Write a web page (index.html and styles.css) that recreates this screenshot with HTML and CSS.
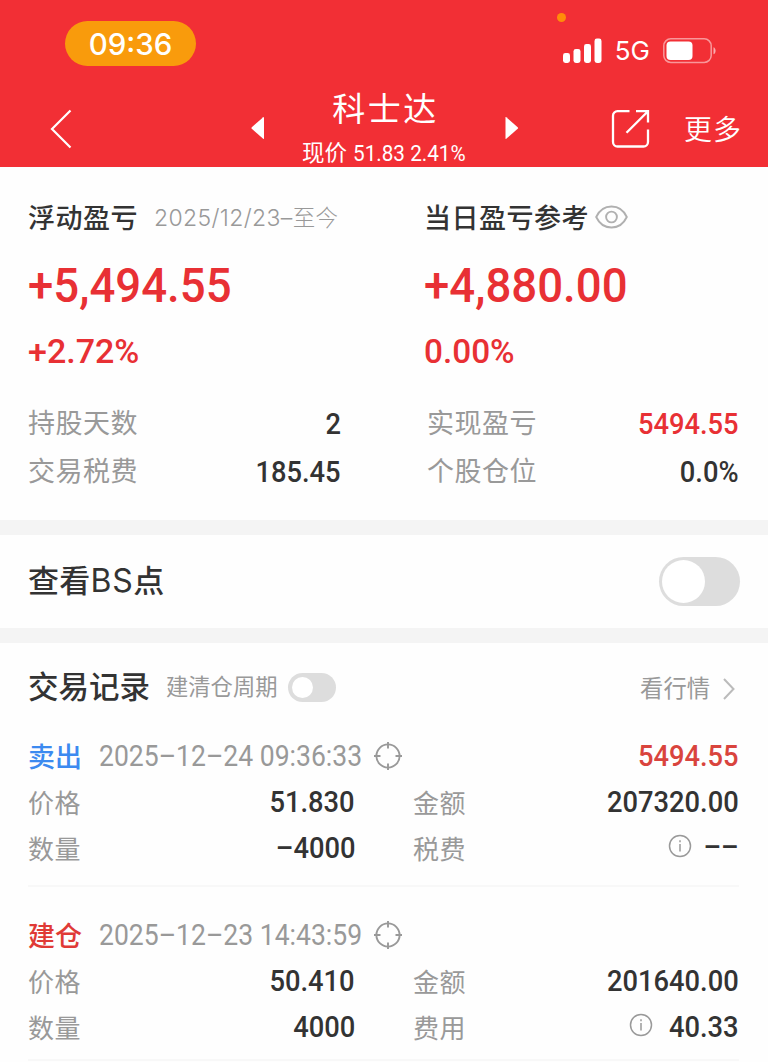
FILE: index.html
```html
<!DOCTYPE html>
<html lang="zh-CN">
<head>
<meta charset="utf-8">
<title>科士达</title>
<link rel="stylesheet" href="styles.css">
</head>
<body>
<header class="header">
  <div class="status">
    <span class="clock">09:36</span>
    <div class="status-right">
      <svg class="signal" width="40" height="26" viewBox="0 0 40 26" fill="#fff"><rect x="0" y="15" width="7" height="10" rx="2.4"/><rect x="10.5" y="11" width="7" height="14" rx="2.4"/><rect x="21" y="6" width="7" height="19" rx="2.4"/><rect x="31.5" y="0.5" width="7" height="24.5" rx="2.4"/></svg>
      <span class="net">5G</span>
      <svg class="battery" width="54" height="26" viewBox="0 0 54 26"><rect x="0.8" y="0.8" width="47.4" height="23.6" rx="7" fill="none" stroke="#fff" stroke-opacity=".5" stroke-width="1.5"/><rect x="3.5" y="3.5" width="26" height="18.4" rx="4" fill="#fff"/><path d="M50.5 9.2c2.800 1 2.800 6 0 7z" fill="#fff" opacity=".6"/></svg>
    </div>
    <i class="mic-dot"></i>
  </div>
  <nav class="nav">
    <svg class="back" width="22" height="40" viewBox="0 0 22 40" fill="none" stroke="#fff" stroke-width="2.200"><path d="M20.500 1.500 2 20l18.500 18.500"/></svg>
    <svg class="prev" width="14" height="24" viewBox="0 0 14 24" fill="#fff"><path d="M14 1.500v21q0 .8-.8.3L1.800 12.800q-.8-.8 0-1.600L13.200 1.200q.8-.5.8.3z"/></svg>
    <div class="title">
      <h1 class="name">科士达</h1>
      <p class="price">现价 <span class="num">51.83 2.41%</span></p>
    </div>
    <svg class="next" width="14" height="24" viewBox="0 0 14 24" fill="#fff"><path d="M.5 1.500v21q0 .8.8.3L12.700 12.800q.8-.8 0-1.600L1.300 1.200Q.5.700.5 1.500z"/></svg>
    <svg class="share" width="40" height="40" viewBox="0 0 40 40" fill="none" stroke="#fff" stroke-width="2.300"><path d="M18.500 2.200H6.500a4.500 4.500 0 0 0-4.500 4.500V33A4.500 4.500 0 0 0 6.500 37.500H32.500A4.500 4.500 0 0 0 37 33V20.500"/><path d="M25 2.200H37V13.500M37 2.200 15.500 23.700"/></svg>
    <span class="more">更多</span>
  </nav>
</header>

<section class="summary">
  <div class="col">
    <div class="col-title"><b>浮动盈亏</b><span class="period">2025/12/23–<span class="cjk">至今</span></span></div>
    <div class="amount"><span class="num">+5,494.55</span></div>
    <div class="percent"><span class="num">+2.72%</span></div>
    <div class="row"><span class="label">持股天数</span><span class="num value">2</span></div>
    <div class="row"><span class="label">交易税费</span><span class="num value">185.45</span></div>
  </div>
  <div class="col col-day">
    <div class="col-title"><b>当日盈亏参考</b><svg class="eye" width="33" height="24" viewBox="0 0 33 24" fill="none" stroke="#b0b0b0" stroke-width="1.900"><path d="M1.200 12C4.500 5 10 1.500 16.500 1.500S28.500 5 31.800 12C28.500 19 23 22.500 16.500 22.500S4.500 19 1.200 12z"/><circle cx="16.500" cy="12" r="5.400"/></svg></div>
    <div class="amount"><span class="num">+4,880.00</span></div>
    <div class="percent zero"><span class="num">0.00%</span></div>
    <div class="row"><span class="label">实现盈亏</span><span class="num value red">5494.55</span></div>
    <div class="row"><span class="label">个股仓位</span><span class="num value">0.0%</span></div>
  </div>
</section>

<section class="bs">
  <span class="bs-title">查看<span class="latin">BS</span>点</span>
  <span class="switch"></span>
</section>

<section class="records">
  <div class="records-head">
    <h2>交易记录</h2>
    <span class="cycle">建清仓周期</span>
    <span class="switch small"></span>
    <span class="quote">看行情</span>
    <svg width="12" height="22" viewBox="0 0 12 22" fill="none" stroke="#bbb" stroke-width="2"><path d="M1 1l9.500 10L1 21"/></svg>
  </div>

  <article class="record">
    <div class="record-head">
      <span class="side sell">卖出</span>
      <span class="num time">2025–12–24 09:36:33</span>
      <svg class="target" width="30" height="30" viewBox="0 0 30 30" fill="none" stroke="#999" stroke-width="1.900"><circle cx="15" cy="15" r="11.600"/><path d="M15 1v6.500M15 22.500v6.500M1 15h6.500M22.500 15h6.500"/></svg>
      <span class="num value profit">5494.55</span>
    </div>
    <div class="pair">
      <span class="label">价格</span><span class="num value">51.830</span>
      <span class="label second">金额</span><span class="num value">207320.00</span>
    </div>
    <div class="pair">
      <span class="label">数量</span><span class="num value">–4000</span>
      <span class="label second">税费</span><span class="fee"><svg width="24" height="24" viewBox="0 0 24 24" fill="none" stroke="#999" stroke-width="1.500"><circle cx="12" cy="12" r="10.500"/><path d="M12 10v7.500M12 6.300v2"/></svg><span class="num value dashes">––</span></span>
    </div>
  </article>

  <article class="record">
    <div class="record-head">
      <span class="side open">建仓</span>
      <span class="num time">2025–12–23 14:43:59</span>
      <svg class="target" width="30" height="30" viewBox="0 0 30 30" fill="none" stroke="#999" stroke-width="1.900"><circle cx="15" cy="15" r="11.600"/><path d="M15 1v6.500M15 22.500v6.500M1 15h6.500M22.500 15h6.500"/></svg>
    </div>
    <div class="pair">
      <span class="label">价格</span><span class="num value">50.410</span>
      <span class="label second">金额</span><span class="num value">201640.00</span>
    </div>
    <div class="pair">
      <span class="label">数量</span><span class="num value">4000</span>
      <span class="label second">费用</span><span class="fee"><svg width="24" height="24" viewBox="0 0 24 24" fill="none" stroke="#999" stroke-width="1.500"><circle cx="12" cy="12" r="10.500"/><path d="M12 10v7.500M12 6.300v2"/></svg><span class="num value">40.33</span></span>
    </div>
  </article>
</section>
</body>
</html>
```
FILE: styles.css
```css
* { box-sizing: border-box; margin: 0; padding: 0; }
body {
  width: 768px;
  height: 1062px;
  overflow: hidden;
  background: #fefefe;
  color: #333;
  font-family: Roboto, "Noto Sans CJK SC", sans-serif;
}
svg { display: block; flex: none; }
span, b, h1, h2, p { white-space: nowrap; }
.num { display: inline-block; transform: scaleX(.92); transform-origin: left center; }

/* header */
.header { height: 167px; background: #f22f35; color: #fff; }
.status { position: relative; height: 88px; padding: 21px 51px 0 65px; display: flex; justify-content: space-between; align-items: flex-start; }
.clock { width: 131px; height: 45px; border-radius: 23px; background: #f99b0c; font: 450 29.500px/46px Inter, sans-serif; text-align: center; }
.status-right { display: flex; align-items: center; margin-top: 17px; }
.signal { margin-right: 1px; }
.net { font: 400 26px/26px Inter, sans-serif; margin: 0 13px 0 11px; }
.mic-dot { position: absolute; left: 557px; top: 13px; width: 9px; height: 9px; border-radius: 50%; background: #ff8c0a; }
.nav { display: flex; align-items: flex-start; height: 79px; padding-left: 50px; }
.back { margin-top: 21px; }
.prev { margin: 28px 0 0 178px; }
.title { width: 241px; text-align: center; }
.name { font-size: 33px; font-weight: 400; line-height: 42px; letter-spacing: 2.500px; padding: 1px 0 0 2px; }
.price { font-size: 22.500px; line-height: 26px; margin-top: 9px; font-weight: 400; padding-left: 8px; }
.price .num { font-weight: 450; }
.next { margin-top: 28px; }
.share { margin: 21px 0 0 92px; }
.more { font-size: 28px; line-height: 40px; letter-spacing: 1px; margin: 23px 0 0 33px; font-weight: 350; }

/* summary */
.summary { display: flex; height: 353px; padding: 30px 29px 0 28px; }
.col { width: 313px; }
.col-day { width: 314px; margin-left: 84px; }
.col-title { display: flex; align-items: center; height: 42px; }
.col-title b { font-size: 27px; font-weight: 500; letter-spacing: .500px; line-height: 42px; margin-top: 1px; }
.col-day .col-title b { margin-left: -1px; }
.period { font: 300 23px/40px Inter, sans-serif; letter-spacing: .350px; color: #999; margin: -2px 0 0 16px; }
.cjk { font-family: "Noto Sans CJK SC", sans-serif; font-size: 22.500px; }
.eye { margin: -2px 0 0 6px; }
.amount { font-size: 49px; font-weight: 500; line-height: 60px; margin-top: 17px; color: #e83034; }
.amount .num { transform: scaleX(.93); }
.col-day .amount, .col-day .percent { margin-left: -1px; }
.percent { font-size: 34px; font-weight: 500; line-height: 40px; margin: 15px 0 29px; color: #e83034; }
.percent .num { transform: none; }
.zero .num { transform: scaleX(.98); }
.row { display: flex; justify-content: space-between; height: 48px; line-height: 48px; }
.label { font-size: 27px; letter-spacing: .500px; color: #999; font-weight: 400; }
.col-day .label { margin-left: 2px; }
.value { font-size: 30px; font-weight: 500; color: #333; transform: scaleX(.91); transform-origin: right center; }
.red { color: #e83034; }

/* switch row */
.bs { display: flex; justify-content: space-between; align-items: center; height: 123px; border: solid #f4f4f4; border-width: 15px 0; padding: 0 28px; }
.bs-title { font-size: 31px; line-height: 44px; font-weight: 500; letter-spacing: .300px; }
.latin { font-family: Inter, sans-serif; font-weight: 400; font-size: 32px; letter-spacing: .600px; }
.switch { display: block; width: 81px; height: 49px; padding: 3px; border-radius: 25px; background: #ddd; }
.switch::before { content: ""; display: block; width: 43px; height: 43px; border-radius: 50%; background: #fff; }
.small { width: 48px; height: 29px; padding: 4px; }
.small::before { width: 21px; height: 21px; }

/* records */
.records { padding: 20px 29px 0 28px; }
.records-head { display: flex; align-items: center; height: 48px; padding-right: 4px; }
.records-head h2 { font-size: 30.500px; font-weight: 500; line-height: 48px; margin-top: 1px; }
.cycle { font-size: 22.300px; color: #999; margin: -4px 10px 0 16px; }
.quote { font-size: 23.300px; color: #999; margin: -1px 13px 0 auto; }
.records-head svg { margin-top: 4px; }
.record + .record { padding-top: 25px; height: 174px; }
.record { height: 179px; border-bottom: 2px solid #f8f8f8; }
.record:first-of-type { height: 154px; margin-top: 22px; }
.record-head { display: flex; align-items: center; height: 46px; }
.side { font-size: 27px; font-weight: 500; margin-top: -2px; width: 54px; }
.sell { color: #3c8af0; }
.open { color: #e03a36; }
.time { font-size: 29px; color: #999; margin-left: 16.500px; width: 274.500px; transform: scaleX(.915); }
.profit { margin: -2px 0 0 auto; color: #d9443d; }
.pair { display: grid; grid-template-columns: 60px 267px 58px 80px 1fr; height: 45.500px; line-height: 45px; }
.pair .label { font-size: 26px; padding-top: 3px; }
.pair .value { justify-self: end; }
.pair > .value:last-child, .fee { grid-column: 5; }
.second { grid-column: 4; }
.fee { display: flex; justify-content: flex-end; align-items: center; height: 45px; gap: 9px; }
.fee svg { margin-top: -3px; }
.dashes { position: relative; top: -1px; margin-left: -1px; }
```
